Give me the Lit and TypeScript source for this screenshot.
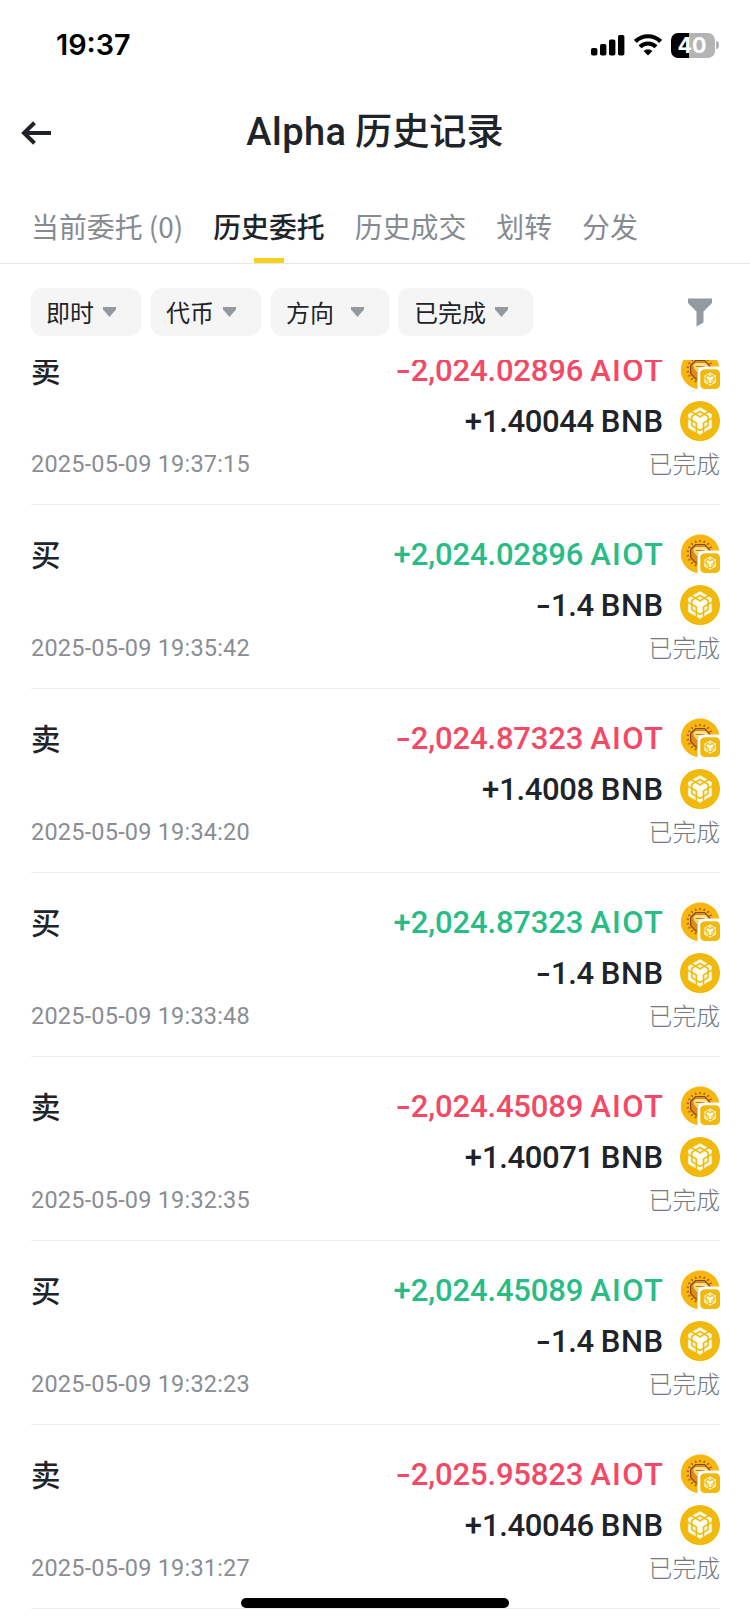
import { LitElement, html, css, svg } from "lit";
import { customElement, property } from "lit/decorators.js";
import { classMap } from "lit/directives/class-map.js";

interface Order {
  side: "buy" | "sell";
  token: string;
  bnb: string;
  time: string;
}

const ORDERS: Order[] = [
  { side: "sell", token: "-2,024.02896", bnb: "+1.40044", time: "2025-05-09 19:37:15" },
  { side: "buy", token: "+2,024.02896", bnb: "-1.4", time: "2025-05-09 19:35:42" },
  { side: "sell", token: "-2,024.87323", bnb: "+1.4008", time: "2025-05-09 19:34:20" },
  { side: "buy", token: "+2,024.87323", bnb: "-1.4", time: "2025-05-09 19:33:48" },
  { side: "sell", token: "-2,024.45089", bnb: "+1.40071", time: "2025-05-09 19:32:35" },
  { side: "buy", token: "+2,024.45089", bnb: "-1.4", time: "2025-05-09 19:32:23" },
  { side: "sell", token: "-2,025.95823", bnb: "+1.40046", time: "2025-05-09 19:31:27" },
];

const TABS = ["当前委托 (0)", "历史委托", "历史成交", "划转", "分发"];

const FILTERS = [
  { label: "即时", cls: "instant" },
  { label: "代币", cls: "coin" },
  { label: "方向", cls: "direction" },
  { label: "已完成", cls: "done" },
];

const cube = svg`<path d="M5.631 3.676L12.001 0l6.367 3.676-2.34 1.358L12 2.716 7.972 5.034l-2.34-1.358zm12.737 4.636l-2.34-1.358L12 9.272 7.972 6.954l-2.34 1.358v2.716l4.026 2.318v4.636L12 19.341l2.341-1.359v-4.636l4.027-2.318V8.312zm0 7.352v-2.716l-2.34 1.358v2.716l2.34-1.358zm1.663.96l-4.027 2.318v2.717l6.368-3.677V10.63l-2.34 1.358v4.636zm-2.34-10.63l2.34 1.358v2.716l2.341-1.358V5.994l-2.34-1.359-2.341 1.359zM9.657 19.926v2.716L12 24l2.341-1.358v-2.716l-2.34 1.358-2.342-1.358zm-4.027-4.262l2.341 1.358v-2.716l-2.34-1.358v2.716zm4.027-9.67L12 7.352l2.341-1.358-2.34-1.359-2.342 1.359zm-5.69 1.358L6.31 5.994 3.968 4.635l-2.34 1.359v2.716l2.34 1.358V7.352zm0 4.636L1.628 10.63v7.353L7.996 21.66v-2.717l-4.027-2.318v-4.636z"/>`;

const bnbIcon = html`<svg class="icon" viewBox="0 0 40 40">
  <circle cx="20" cy="20" r="20" fill="#f0b90b" />
  <g transform="translate(6.4 6.4) scale(1.13)" fill="#fffdf0" stroke="#fffdf0" stroke-width=".3">${cube}</g>
</svg>`;

const rays = Array.from(
  { length: 18 },
  (_, i) => svg`<path d="M20 6v2.2" transform="rotate(${i * 20} 20 19.500)" />`,
);

const aiotIcon = html`<svg class="icon" viewBox="0 0 40 40">
  <circle cx="20.2" cy="19.800" r="19.4" fill="#f8b611" />
  <g stroke="#a9560f" stroke-width="1.4">${rays}</g>
  <path d="M15.600 10.500h9l5 5v8l-5 5.500h-9l-5-5.500v-8z" fill="#d98c17" stroke="#8d4511" stroke-width="1.2" />
  <path d="M15.500 13h10l2.4 2.600-1.800 4-5.600 5.600-5.600-5.600-1.800-4z" fill="#ffe08a" />
  <path d="M15.500 16.500h9.500M17.5 19.800h5" stroke="#c07a16" stroke-width="1.2" />
  <path d="M17.6 40V22.4q0-6 6-6H40V40z" fill="#fff" />
  <rect x="20.200" y="19.2" width="19.8" height="19.8" rx="4.6" fill="#f0b90b" />
  <g transform="translate(23.4 22.4) scale(.56)" fill="#fffdf0">${cube}</g>
</svg>`;

@customElement("order-row")
export class OrderRow extends LitElement {
  @property({ attribute: false }) order!: Order;

  static styles = css`
    :host {
      display: block;
      box-sizing: border-box;
      height: 184px;
      border-bottom: 1px solid #ececee;
      padding: 29px 0 0;
      color: #202328;
    }
    .grid {
      display: grid;
      grid-template-columns: 1fr auto;
      grid-template-rows: 40px 40px 24px;
      row-gap: 12px;
      align-items: center;
    }
    .side {
      font-size: 29.5px;
      line-height: 36px;
      padding-bottom: 3px;
      font-weight: 500;
    }
    .amount {
      grid-column: 2;
      display: flex;
      justify-content: flex-end;
      align-items: center;
      font: 500 31px/38px Roboto, "Noto Sans CJK SC", sans-serif;
      white-space: pre;
    }
    .sign,
    .num,
    .unit {
      padding-top: 2px;
    }
    .minus {
      width: 14px;
      margin-right: 1px;
      transform: scaleX(1.4);
      transform-origin: left;
    }
    .num {
      letter-spacing: -0.15px;
      margin-right: 7px;
    }
    .second .num {
      letter-spacing: -0.35px;
    }
    .unit {
      letter-spacing: 0.5px;
      margin-right: 16.5px;
    }
    .token {
      letter-spacing: 1.3px;
      margin-right: 15.7px;
    }
    .buy {
      color: #2abc87;
    }
    .sell {
      color: #f24a66;
    }
    .icon {
      display: block;
      width: 40px;
      height: 40px;
    }
    .time {
      font: 400 23.5px/20px Roboto, sans-serif;
      padding-bottom: 4px;
      color: #8a8d93;
      letter-spacing: 0.2px;
    }
    .status {
      font-size: 23.8px;
      line-height: 18px;
      padding-bottom: 7px;
      font-weight: 300;
      color: #74777d;
      text-align: right;
    }
    .second {
      position: relative;
      top: -1px;
    }
  `;

  private amount(value: string, unit: string, token: boolean) {
    const sign = value[0];
    return html`<span class="sign ${classMap({ minus: sign === "-" })}">${sign}</span
      ><span class="num">${value.slice(1)}</span
      ><span class="unit ${classMap({ token })}">${unit}</span>`;
  }

  render() {
    const { side, token, bnb, time } = this.order;
    return html`<div class="grid">
      <div class="side">${side === "buy" ? "买" : "卖"}</div>
      <div class="amount ${classMap({ buy: side === "buy", sell: side === "sell" })}">
        ${this.amount(token, "AIOT", true)}${aiotIcon}
      </div>
      <div class="amount second">${this.amount(bnb, "BNB", false)}${bnbIcon}</div>
      <div class="time">${time}</div>
      <div class="status">已完成</div>
    </div>`;
  }
}

@customElement("app-root")
export class AppRoot extends LitElement {
  static styles = css`
    :host {
      display: flex;
      flex-direction: column;
      position: relative;
      box-sizing: border-box;
      width: 750px;
      height: 1624px;
      overflow: hidden;
      background: #fff;
      color: #202328;
      font-family: "Noto Sans CJK SC", sans-serif;
    }
    .status-bar {
      display: flex;
      align-items: center;
      height: 90px;
      padding: 0 31px 0 56px;
      box-sizing: border-box;
    }
    .clock {
      flex: 1;
      font: 600 28.8px/34px Inter, sans-serif;
      color: #000;
    }
    .signal {
      width: 34px;
      height: 22px;
      margin-right: 9px;
    }
    .wifi {
      width: 28px;
      height: 22px;
      margin-right: 9px;
    }
    .battery {
      display: flex;
      justify-content: center;
      align-items: center;
      box-sizing: border-box;
      width: 44px;
      height: 25px;
      padding-right: 2px;
      border-radius: 7px;
      background: linear-gradient(to right, #000 40%, #b4b4b6 40%);
      font: 700 21.5px/25px Inter, sans-serif;
      color: #fff;
    }
    .nub {
      width: 3px;
      height: 8px;
      margin-left: 1px;
      border-radius: 0 3px 3px 0;
      background: #b4b4b6;
    }
    .header {
      display: grid;
      grid-template-columns: 60px 1fr 60px;
      align-items: center;
      height: 84px;
    }
    .back {
      width: 30px;
      height: 24px;
      margin: 2px 0 0 21px;
    }
    .title {
      text-align: center;
      font-size: 37.2px;
      font-weight: 500;
      line-height: 50px;
      padding-bottom: 3px;
      white-space: pre;
    }
    .latin {
      font-family: Roboto, sans-serif;
      font-size: 38px;
      letter-spacing: 0.5px;
    }
    .tabs {
      display: flex;
      gap: 30px;
      height: 89px;
      padding: 0 31px;
      border-bottom: 1px solid #e6e8ea;
    }
    .tab {
      display: flex;
      flex-direction: column;
      align-items: center;
      font-size: 27.9px;
      line-height: 40px;
      padding-top: 32px;
      box-sizing: border-box;
      color: #868b92;
      white-space: pre;
    }
    .tab.active {
      color: #202328;
      font-weight: 500;
    }
    .underline {
      width: 30px;
      height: 5px;
      margin-top: 12px;
      background: #fcd11b;
    }
    .filters {
      display: flex;
      align-items: center;
      height: 96px;
      padding: 0 38px 0 31px;
      gap: 10px;
    }
    .chip {
      display: flex;
      align-items: center;
      justify-content: space-between;
      box-sizing: border-box;
      width: 110px;
      height: 48px;
      padding: 0 25px 0 15px;
      border-radius: 11px;
      background: #f5f5f5;
      font-size: 24px;
      line-height: 47px;
    }
    .label {
      padding-bottom: 1px;
    }
    .direction {
      width: 118px;
    }
    .done {
      width: 135px;
      padding: 0 25px 0 16px;
      margin-left: -1px;
    }
    .caret {
      width: 13px;
      height: 10px;
    }
    .funnel {
      width: 24px;
      height: 30px;
      margin-left: auto;
    }
    .list {
      flex: 1;
      overflow: hidden;
      padding: 0 30px 0 31px;
    }
    .scroll {
      margin-top: -39px;
    }
    .home {
      position: absolute;
      left: 241px;
      bottom: 16px;
      width: 268px;
      height: 10px;
      border-radius: 5px;
      background: #000;
    }
  `;

  render() {
    return html`
      <div class="status-bar">
        <div class="clock">19:37</div>
        <svg class="signal" viewBox="0 0 34 22">
          <rect x="0" y="14" width="6.4" height="7.5" rx="1.8" />
          <rect x="9" y="10" width="6.4" height="11.5" rx="1.8" />
          <rect x="18" y="5.5" width="6.4" height="16" rx="1.8" />
          <rect x="27" y="1" width="6.4" height="20.5" rx="1.8" />
        </svg>
        <svg class="wifi" viewBox="0 0 28 22">
          <g fill="none" stroke="#000" stroke-width="4.2">
            <path d="M1.4 7.4a18 18 0 0 1 25.2 0" />
            <path d="M6 12.8a11.4 11.4 0 0 1 16 0" />
          </g>
          <path d="M9.6 17a6.4 6.4 0 0 1 8.8 0L14 21.4z" />
        </svg>
        <div class="battery">40</div>
        <div class="nub"></div>
      </div>
      <div class="header">
        <svg class="back" viewBox="0 0 30 24" fill="none" stroke="#202328" stroke-width="4">
          <path d="M30 12H4M13.5 1.8L3 12l10.5 10.2" />
        </svg>
        <div class="title"><span class="latin">Alpha</span> 历史记录</div>
      </div>
      <div class="tabs">
        ${TABS.map(
          (t, i) => html`<div class="tab ${classMap({ active: i === 1 })}">
            <span>${t}</span>${i === 1 ? html`<div class="underline"></div>` : ""}
          </div>`,
        )}
      </div>
      <div class="filters">
        ${FILTERS.map(
          (f) => html`<div class="chip ${f.cls}">
            <span class="label">${f.label}</span>
            <svg class="caret" viewBox="0 0 13 10"><path d="M0 0h13v2.5L6.5 10 0 2.5z" fill="#949aa2" /></svg>
          </div>`,
        )}
        <svg class="funnel" viewBox="0 0 24 30">
          <path d="M0 1.5h24V6l-8.5 8.5v11l-7 4v-15L0 6z" fill="#929aa2" />
        </svg>
      </div>
      <div class="list">
        <div class="scroll">${ORDERS.map((o) => html`<order-row .order=${o}></order-row>`)}</div>
      </div>
      <div class="home"></div>
    `;
  }
}
